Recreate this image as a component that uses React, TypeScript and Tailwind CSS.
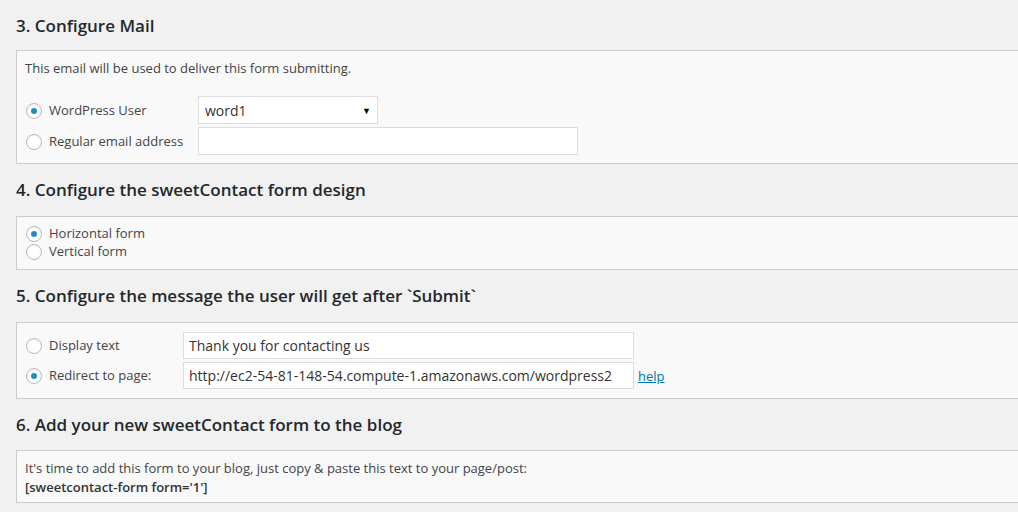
import { useState } from 'react'

function Radio({ checked, onClick }: { checked: boolean; onClick: () => void }) {
  return (
    <button
      type="button"
      onClick={onClick}
      className="flex h-[16px] w-[16px] shrink-0 items-center justify-center rounded-full border border-[#b4b9be] bg-white shadow-[inset_0_1px_2px_rgba(0,0,0,0.07)]"
    >
      {checked && <span className="h-[6px] w-[6px] rounded-full bg-[#1e8cbe]" />}
    </button>
  )
}

function Heading({ children }: { children: React.ReactNode }) {
  return <h2 className="h-[24px] text-[17px] font-semibold leading-[24px] text-[#23282d]">{children}</h2>
}

export default function App() {
  const [mailMode, setMailMode] = useState<'user' | 'email'>('user')
  const [design, setDesign] = useState<'horizontal' | 'vertical'>('horizontal')
  const [afterSubmit, setAfterSubmit] = useState<'text' | 'redirect'>('redirect')
  const [user, setUser] = useState('word1')
  const [email, setEmail] = useState('')
  const [message, setMessage] = useState('Thank you for contacting us')
  const [redirect, setRedirect] = useState('http://ec2-54-81-148-54.compute-1.amazonaws.com/wordpress2')

  return (
    <div className="min-h-[512px] w-[1018px] overflow-hidden bg-[#f1f1f1] pl-[16px] pt-[14px] text-[13px] text-[#444] font-['Open_Sans',sans-serif]">
      <Heading>3. Configure Mail</Heading>
      <div className="mb-[14px] mt-[12px] w-[1020px] border border-[#ccc] bg-[#f9f9f9] px-[8px] pb-[8px] pt-[8px]">
        <p className="leading-[18px]">This email will be used to deliver this form submitting.</p>
        <div className="mt-[19px] flex flex-col gap-[3px]">
          <div className="flex h-[28px] items-center">
            <div className="flex w-[173px] items-center gap-[7px] pl-[1px] pt-[1px]">
              <Radio checked={mailMode === 'user'} onClick={() => setMailMode('user')} />
              <span>WordPress User</span>
            </div>
            <div className="relative h-[28px] w-[180px] border border-[#ddd] bg-white">
              <select
                value={user}
                onChange={e => setUser(e.target.value)}
                className="h-full w-full appearance-none bg-transparent pl-[6px] pt-[1px] text-[14px] text-[#333] outline-none"
              >
                <option value="word1">word1</option>
              </select>
              <span className="pointer-events-none absolute right-[6px] top-[7px] text-[9px] text-black">▼</span>
            </div>
          </div>
          <div className="flex h-[28px] items-center">
            <div className="flex w-[173px] items-center gap-[7px] pl-[1px] pt-[1px]">
              <Radio checked={mailMode === 'email'} onClick={() => setMailMode('email')} />
              <span>Regular email address</span>
            </div>
            <input
              value={email}
              onChange={e => setEmail(e.target.value)}
              className="h-[28px] w-[380px] border border-[#ddd] bg-white px-[6px] text-[14px] outline-none"
            />
          </div>
        </div>
      </div>

      <Heading>4. Configure the sweetContact form design</Heading>
      <div className="mb-[14px] mt-[14px] w-[1020px] border border-[#ccc] bg-[#f9f9f9] px-[8px] py-[8px]">
        <div className="flex h-[18px] items-center gap-[7px] pl-[1px]">
          <Radio checked={design === 'horizontal'} onClick={() => setDesign('horizontal')} />
          <span>Horizontal form</span>
        </div>
        <div className="flex h-[18px] items-center gap-[7px] pl-[1px]">
          <Radio checked={design === 'vertical'} onClick={() => setDesign('vertical')} />
          <span>Vertical form</span>
        </div>
      </div>

      <Heading>5. Configure the message the user will get after `Submit`</Heading>
      <div className="mb-[14px] mt-[14px] flex w-[1020px] flex-col gap-[3px] border border-[#ccc] bg-[#f9f9f9] px-[8px] pb-[9px] pt-[9px]">
        <div className="flex h-[27px] items-center">
          <div className="flex w-[158px] items-center gap-[7px] pl-[1px] pt-[1px]">
            <Radio checked={afterSubmit === 'text'} onClick={() => setAfterSubmit('text')} />
            <span>Display text</span>
          </div>
          <input
            value={message}
            onChange={e => setMessage(e.target.value)}
            className="h-[27px] w-[451px] border border-[#ddd] bg-white px-[5px] text-[14px] text-[#333] outline-none"
          />
        </div>
        <div className="flex h-[27px] items-center">
          <div className="flex w-[158px] items-center gap-[7px] pl-[1px] pt-[1px]">
            <Radio checked={afterSubmit === 'redirect'} onClick={() => setAfterSubmit('redirect')} />
            <span>Redirect to page:</span>
          </div>
          <input
            value={redirect}
            onChange={e => setRedirect(e.target.value)}
            className="h-[27px] w-[451px] border border-[#ddd] bg-white px-[5px] text-[14px] text-[#333] outline-none"
          />
          <a href="#" className="ml-[4px] pt-[2px] text-[#0073aa] underline">help</a>
        </div>
      </div>

      <Heading>6. Add your new sweetContact form to the blog</Heading>
      <div className="mt-[13px] w-[1020px] border border-[#ccc] bg-[#f9f9f9] px-[8px] pb-[5px] pt-[8px] leading-[19px]">
        <p>It's time to add this form to your blog, just copy &amp; paste this text to your page/post:</p>
        <p className="font-semibold text-[#333]">[sweetcontact-form form='1']</p>
      </div>
    </div>
  )
}
